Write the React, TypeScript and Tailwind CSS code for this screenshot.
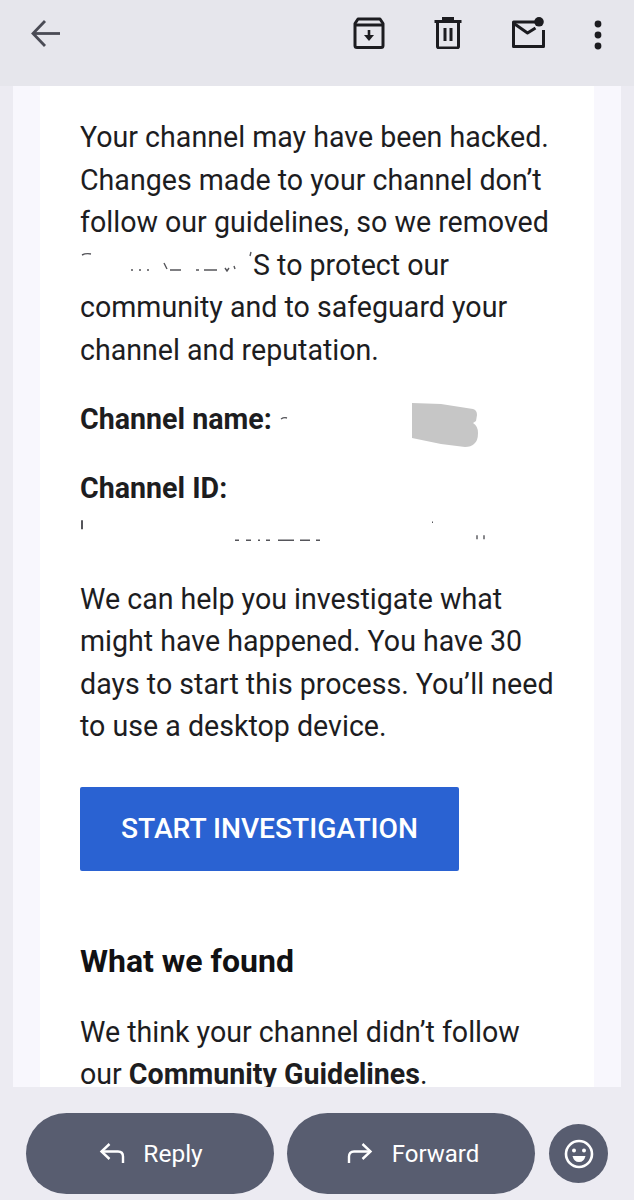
import React from 'react';

const para = 'text-[28.6px] leading-[42.5px] text-[#1d1d1f]';

function ArchiveIcon() {
  return (
    <svg width="32" height="32" viewBox="0 0 32 32" fill="none" stroke="#1c1c20" strokeWidth="3" strokeLinejoin="round">
      <path d="M2 6.500 5 2h22l3 4.500v22a2 2 0 0 1-2 2H4a2 2 0 0 1-2-2z" />
      <path d="M2 8h28" />
      <path d="M16 13v8" strokeWidth="2.600" />
      <path d="M11 18h10l-5 6z" fill="#1c1c20" stroke="none" />
    </svg>
  );
}

function TrashIcon() {
  return (
    <svg width="28" height="32" viewBox="0 0 28 32" fill="none" stroke="#1c1c20" strokeWidth="3">
      <path d="M0.500 4.500h27" />
      <path d="M9.500 3V1.500h9V3" />
      <path d="M3.500 5v24.500a1.500 1.500 0 0 0 1.500 1.500h18a1.500 1.500 0 0 0 1.500-1.500V5" />
      <path d="M11 11v13M17 11v13" />
    </svg>
  );
}

function MailDotIcon() {
  return (
    <svg width="34" height="32" viewBox="0 0 34 32" fill="none" stroke="#1c1c20" strokeWidth="3" strokeLinejoin="round">
      <path d="M24 5H2.500v24.500h30V13" />
      <path d="M3 6.500 16.500 16l8-5" />
      <circle cx="28" cy="4.800" r="4.800" fill="#1c1c20" stroke="none" />
    </svg>
  );
}

function DotsIcon() {
  return (
    <svg width="10" height="30" viewBox="0 0 10 30" fill="#1c1c20">
      <circle cx="5" cy="4" r="3.400" />
      <circle cx="5" cy="15" r="3.400" />
      <circle cx="5" cy="26" r="3.400" />
    </svg>
  );
}

export default function App() {
  return (
    <div className="flex h-[1200px] w-[634px] flex-col overflow-hidden bg-[#ecebf2] font-['Roboto',sans-serif]">
      {/* Top bar */}
      <header className="flex h-[86px] shrink-0 items-start bg-[#e6e6ec] pt-[17px]">
        <svg className="ml-[31px] mt-[3px]" width="29" height="27" viewBox="0 0 29 27" fill="none" stroke="#4a4b55" strokeWidth="2.800">
          <path d="M14 1 2 13.500 14 26" />
          <path d="M2 13.500h27" />
        </svg>
        <div className="ml-[293px]"><ArchiveIcon /></div>
        <div className="ml-[49px]"><TrashIcon /></div>
        <div className="ml-[49px]"><MailDotIcon /></div>
        <div className="ml-[48px] mt-[3px]"><DotsIcon /></div>
      </header>

      {/* Message body */}
      <main className="relative min-h-0 flex-1 overflow-hidden px-[13px]">
        <div className="h-full bg-[#f8f7fd] px-[27px]">
          <div className="h-full bg-white px-[40px] pt-[30px]">
            <p className={para}>
              Your channel may have been hacked. Changes made to your channel don’t follow our guidelines, so we removed{' '}
              <svg className="inline-block align-baseline" width="173" height="24" viewBox="0 0 173 24" fill="none" stroke="#55555a" strokeWidth="1.400">
                <path d="M2 4q4-2 9-1" />
                <path d="M51 19h2M59 19h2M67 19h2M84 12l3 6M90 19h11M116 19h3M124 19h13M145 17l2 3 2-3M154 15l1 3M171 1l-1 4" />
              </svg>
              S to protect our community and to safeguard your channel and reputation.
            </p>

            <p className={`${para} mt-[27px] font-bold`}>
              Channel name:{' '}
              <svg className="inline-block" width="22" height="12" viewBox="0 0 22 12" fill="none" stroke="#55555a" strokeWidth="1.400">
                <path d="M2 4q3-2 6-1" />
              </svg>
            </p>

            <p className={`${para} mt-[26px] font-bold`}>Channel ID:</p>
            <svg className="h-[42.500px] w-[420px]" viewBox="0 0 420 42" fill="none" stroke="#55555a">
              <path d="M2 11v9" strokeWidth="2" />
              <path d="M155 31h4M166 31h5M178 31h2M186 31h4M198 31h16M220 31h10M236 31h4M352 13h1M397 26v4M404 26v4" strokeWidth="1.400" />
            </svg>

            <p className={`${para} mt-[26px]`}>
              We can help you investigate what might have happened. You have 30 days to start this process. You’ll need to use a desktop device.
            </p>

            <button className="mt-[39px] flex h-[84px] w-[379px] items-center justify-center rounded-[2px] bg-[#2a62d2] pt-[2px] text-[28.200px] font-medium text-white">
              START INVESTIGATION
            </button>

            <h2 className="mt-[68px] text-[32px] font-bold leading-[44px] text-[#111113]">What we found</h2>

            <p className={`${para} mt-[28px]`}>
              We think your channel didn’t follow our <b className="font-bold">Community Guidelines</b>.
            </p>
          </div>
        </div>

        {/* Grey smudge painted over the channel name */}
        <svg className="absolute left-[411px] top-[317px]" width="68" height="45" viewBox="0 0 68 45" fill="#c6c6c6">
          <path d="M1 0 30 1l32 5q4 1 4 6l-1 6-3 2q5 3 5 10 0 8-4 11-3 3-9 3l-24-3L1 35z" />
        </svg>
      </main>

      {/* Bottom actions */}
      <footer className="flex h-[113px] shrink-0 items-start bg-[#ecebf2] pl-[26px] pt-[26px]">
        <button className="flex h-[81px] w-[248px] items-center justify-center gap-[18px] rounded-full bg-[#585d70] pl-[2px] pt-[1px] text-[24.500px] text-white">
          <svg width="26" height="24" viewBox="0 0 26 24" fill="none" stroke="white" strokeWidth="2.400">
            <path d="M10.500 2 2.500 9.500l8 7.500" />
            <path d="M2.500 9.500H19q5 0 5 5V21" />
          </svg>
          Reply
        </button>
        <button className="ml-[13px] flex h-[81px] w-[248px] items-center justify-center gap-[19px] rounded-full bg-[#585d70] pl-[4px] pt-[1px] text-[24px] text-white">
          <svg width="26" height="24" viewBox="0 0 26 24" fill="none" stroke="white" strokeWidth="2.400">
            <path d="M15.500 2l8 7.500-8 7.500" />
            <path d="M23.500 9.500H7q-5 0-5 5V21" />
          </svg>
          Forward
        </button>
        <button className="ml-[14px] mt-[11px] flex h-[59px] w-[59px] items-center justify-center rounded-full bg-[#585d70]">
          <svg width="30" height="30" viewBox="0 0 30 30" fill="none" stroke="white" strokeWidth="2.600">
            <circle cx="15" cy="15" r="13" />
            <circle cx="10" cy="11.500" r="2" fill="white" stroke="none" />
            <circle cx="20" cy="11.500" r="2" fill="white" stroke="none" />
            <path d="M8.500 17h13q-1.500 6-6.500 6t-6.500-6z" fill="white" stroke="none" />
          </svg>
        </button>
      </footer>
    </div>
  );
}
